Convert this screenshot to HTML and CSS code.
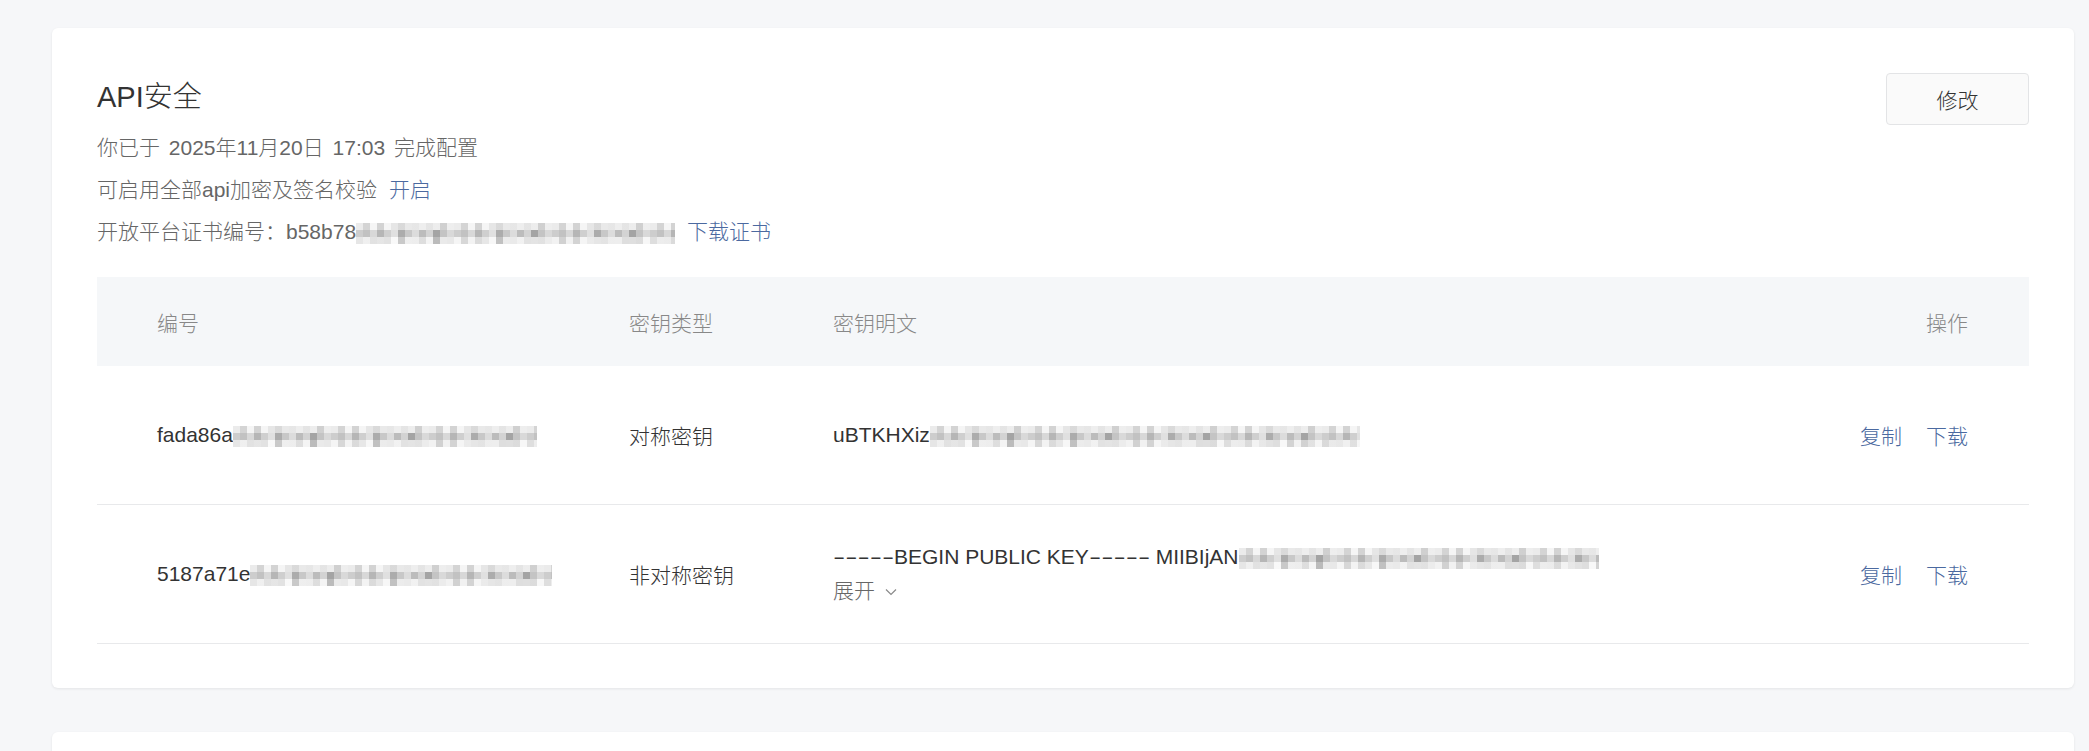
FILE: index.html
```html
<!DOCTYPE html>
<html lang="zh-CN">
<head>
  <meta charset="UTF-8" />
  <title>API安全</title>
  <link rel="stylesheet" href="styles.css">
</head>
<body>

<div class="card">
  <div class="top">
    <div>
      <h2 class="title">API安全</h2>
      <div class="info">
        <p>你已于 2025年11月20日 17:03 完成配置</p>
        <p>可启用全部api加密及签名校验<a class="link" href="#">开启</a></p>
        <p>开放平台证书编号：b58b78<span class="mask w-cert"></span><a class="link" href="#">下载证书</a></p>
      </div>
    </div>
    <button class="btn">修改</button>
  </div>

  <div class="table">
    <div class="row head">
      <div>编号</div>
      <div>密钥类型</div>
      <div>密钥明文</div>
      <div>操作</div>
    </div>
    <div class="row">
      <div>fada86a<span class="mask w-id1"></span></div>
      <div>对称密钥</div>
      <div>uBTKHXiz<span class="mask w-key1"></span></div>
      <div class="ops"><a href="#">复制</a><a href="#">下载</a></div>
    </div>
    <div class="row">
      <div>5187a71e<span class="mask w-id2"></span></div>
      <div>非对称密钥</div>
      <div class="key">
        <div><span class="dash">-----</span>BEGIN PUBLIC KEY<span class="dash">-----</span> MIIBIjAN<span class="mask w-key2"></span></div>
        <div class="expand">展开
          <svg width="12" height="8" viewBox="0 0 12 8"><polyline points="1,1.5 6,6.5 11,1.5" fill="none" stroke="#8a8a8a" stroke-width="1.2"/></svg>
        </div>
      </div>
      <div class="ops"><a href="#">复制</a><a href="#">下载</a></div>
    </div>
  </div>
</div>

<div class="card next"></div>

</body>
</html>
```

FILE: styles.css
```css
* {
  box-sizing: border-box;
}

html, body {
  margin: 0;
  height: 100%;
  overflow: hidden;
}

body {
  background: #f6f7f9;
  font-family: "Liberation Sans", "Noto Sans CJK SC", sans-serif;
  font-size: 21px;
  font-weight: 300;
  color: #333;
  padding: 28px 15px 0 52px;
}

.card {
  background: #fff;
  border-radius: 6px;
  box-shadow: 0 1px 3px rgba(0, 0, 0, 0.08);
  padding: 45px 45px 44px;
}

.card.next {
  margin-top: 44px;
  height: 200px;
}

.top {
  display: flex;
  justify-content: space-between;
  align-items: flex-start;
}

.title {
  margin: 0;
  font-size: 29px;
  line-height: 48px;
  font-weight: 300;
  color: #333;
}

.info {
  margin-top: 6px;
  color: #666;
}

.info p {
  margin: 0;
  line-height: 42px;
  word-spacing: 3px;
}

a {
  color: #4b69a0;
  text-decoration: none;
}

.link {
  margin-left: 12px;
}

.btn {
  width: 143px;
  height: 52px;
  border: 1px solid #e3e4e6;
  border-radius: 4px;
  background: #fafafa;
  font-family: inherit;
  font-size: 21px;
  font-weight: 300;
  color: #333;
  cursor: pointer;
}

.table {
  margin-top: 24px;
}

.row {
  display: grid;
  grid-template-columns: 532px 204px 1fr auto;
  align-items: center;
  height: 139px;
  border-bottom: 1px solid #e8e9eb;
}

.row.head {
  height: 89px;
  background: #f5f7f9;
  color: #888;
  border-bottom: none;
}

.row > div:first-child {
  padding-left: 60px;
}

.row > div:last-child {
  padding-right: 61px;
}

.ops a + a {
  margin-left: 24px;
}

.key {
  line-height: 34px;
}

.dash {
  display: inline-block;
  transform: scaleX(1.75);
  transform-origin: 0 50%;
  margin-right: 26px;
}

.expand {
  color: #666;
}

.expand svg {
  margin-left: 4px;
  vertical-align: middle;
}

.mask {
  display: inline-block;
  vertical-align: middle;
  height: 21px;
  background:
    repeating-linear-gradient(90deg, rgba(255,255,255,.6) 0 7px, rgba(255,255,255,.3) 7px 14px, rgba(255,255,255,.75) 14px 21px, rgba(255,255,255,.4) 21px 28px, rgba(255,255,255,.8) 28px 35px, rgba(255,255,255,.2) 35px 42px, rgba(255,255,255,.55) 42px 49px) top / 100% 7px no-repeat,
    repeating-linear-gradient(90deg, rgba(255,255,255,.5) 0 7px, rgba(255,255,255,.75) 7px 14px, rgba(255,255,255,.25) 14px 21px, rgba(255,255,255,.65) 21px 28px, rgba(255,255,255,.4) 28px 35px, rgba(255,255,255,.8) 35px 42px, rgba(255,255,255,.35) 42px 49px, rgba(255,255,255,.7) 49px 56px, rgba(255,255,255,.5) 56px 63px) bottom / 100% 7px no-repeat,
    repeating-linear-gradient(90deg, #cdcdcd 0 7px, #c2c2c2 7px 14px, #d8d8d8 14px 21px, #b6b6b6 21px 28px, #cfcfcf 28px 35px, #e0e0e0 35px 42px, #acacac 42px 49px, #c8c8c8 49px 56px, #dcdcdc 56px 63px, #bcbcbc 63px 70px, #d3d3d3 70px 77px, #a4a4a4 77px 84px, #c4c4c4 84px 91px, #d9d9d9 91px 98px);
}

.w-cert { width: 319px; }
.w-id1 { width: 304px; }
.w-key1 { width: 430px; }
.w-id2 { width: 302px; }
.w-key2 { width: 360px; }
```
